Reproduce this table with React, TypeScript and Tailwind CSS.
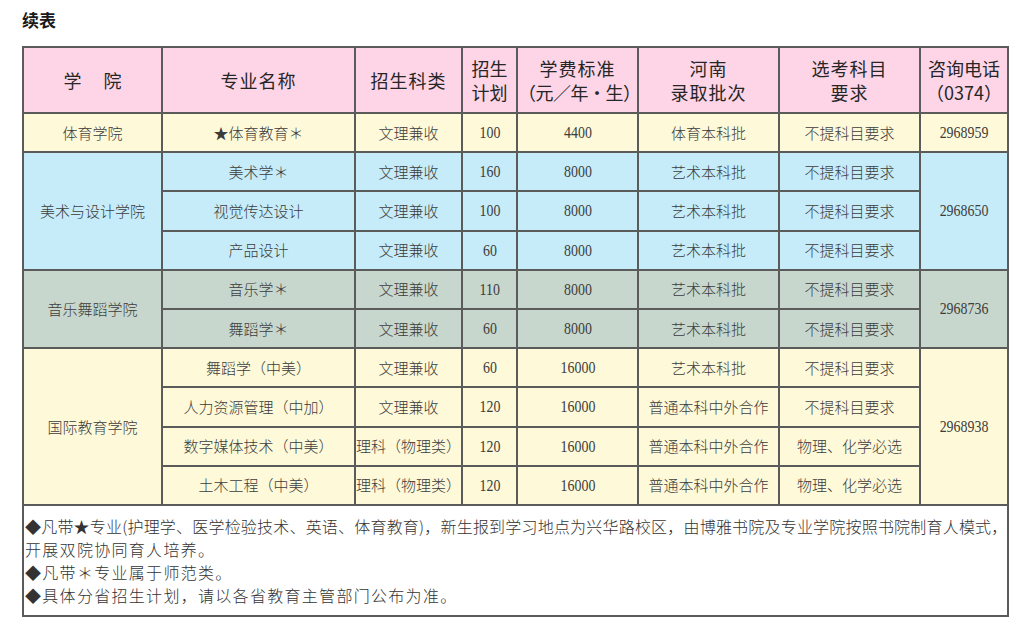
import React from 'react';

type Row = {
  major: string;
  kind: string;
  plan: string;
  fee: string;
  batch: string;
  req: string;
};

type Group = {
  college: string;
  phone: string;
  bg: string;
  rows: Row[];
};

const groups: Group[] = [
  {
    college: '体育学院',
    phone: '2968959',
    bg: 'bg-[#fef9d8]',
    rows: [{ major: '★体育教育＊', kind: '文理兼收', plan: '100', fee: '4400', batch: '体育本科批', req: '不提科目要求' }],
  },
  {
    college: '美术与设计学院',
    phone: '2968650',
    bg: 'bg-[#c6ecf9]',
    rows: [
      { major: '美术学＊', kind: '文理兼收', plan: '160', fee: '8000', batch: '艺术本科批', req: '不提科目要求' },
      { major: '视觉传达设计', kind: '文理兼收', plan: '100', fee: '8000', batch: '艺术本科批', req: '不提科目要求' },
      { major: '产品设计', kind: '文理兼收', plan: '60', fee: '8000', batch: '艺术本科批', req: '不提科目要求' },
    ],
  },
  {
    college: '音乐舞蹈学院',
    phone: '2968736',
    bg: 'bg-[#c8d7cd]',
    rows: [
      { major: '音乐学＊', kind: '文理兼收', plan: '110', fee: '8000', batch: '艺术本科批', req: '不提科目要求' },
      { major: '舞蹈学＊', kind: '文理兼收', plan: '60', fee: '8000', batch: '艺术本科批', req: '不提科目要求' },
    ],
  },
  {
    college: '国际教育学院',
    phone: '2968938',
    bg: 'bg-[#fef9d8]',
    rows: [
      { major: '舞蹈学（中美）', kind: '文理兼收', plan: '60', fee: '16000', batch: '艺术本科批', req: '不提科目要求' },
      { major: '人力资源管理（中加）', kind: '文理兼收', plan: '120', fee: '16000', batch: '普通本科中外合作', req: '不提科目要求' },
      { major: '数字媒体技术（中美）', kind: '理科（物理类）', plan: '120', fee: '16000', batch: '普通本科中外合作', req: '物理、化学必选' },
      { major: '土木工程（中美）', kind: '理科（物理类）', plan: '120', fee: '16000', batch: '普通本科中外合作', req: '物理、化学必选' },
    ],
  },
];

const cell = 'border-2 border-[#5b5b5b] text-center align-middle p-0';
const cjk = "[font-family:'Noto_Sans_CJK_SC',sans-serif]";
const num = "[font-family:'Liberation_Serif','Noto_Sans_CJK_SC',serif]";

// condensed serif digits, like the printed table
function Num({ v }: { v: string }) {
  return <span className={`inline-block scale-x-[0.87] text-[16px] ${num}`}>{v}</span>;
}

export default function App() {
  return (
    <div className="w-[1017px] h-[626px] bg-white overflow-hidden">
      <div className={`pt-[8px] pl-[22px] text-[17px] font-bold leading-[24px] text-[#1a1a1a] ${cjk}`}>续表</div>
      <table className="ml-[22px] mt-[14px] w-[985px] border-collapse table-fixed text-[#3c3c3c]">
        <colgroup>
          <col className="w-[139px]" />
          <col className="w-[193px]" />
          <col className="w-[107px]" />
          <col className="w-[55px]" />
          <col className="w-[121px]" />
          <col className="w-[141px]" />
          <col className="w-[141px]" />
          <col className="w-[88px]" />
        </colgroup>
        <thead>
          <tr className={`h-[66px] bg-[#fdd5e7] text-[18px] leading-[24px] text-[#262626] tracking-[1px] ${cjk}`}>
            <th className={`${cell} font-normal`}>
              <span className="tracking-[22px] pl-[22px]">学院</span>
            </th>
            <th className={`${cell} font-normal`}>专业名称</th>
            <th className={`${cell} font-normal`}>招生科类</th>
            <th className={`${cell} font-normal tracking-[0px]`}>
              <div>招生</div>
              <div>计划</div>
            </th>
            <th className={`${cell} font-normal whitespace-nowrap`}>
              <div>学费标准</div>
              <div className="tracking-[-0.5px]">（元／年·生）</div>
            </th>
            <th className={`${cell} font-normal`}>
              <div>河南</div>
              <div>录取批次</div>
            </th>
            <th className={`${cell} font-normal`}>
              <div>选考科目</div>
              <div>要求</div>
            </th>
            <th className={`${cell} font-normal tracking-[0px] whitespace-nowrap`}>
              <div>咨询电话</div>
              <div>（0374）</div>
            </th>
          </tr>
        </thead>
        <tbody className={`text-[15px] leading-[20px] font-light ${cjk}`}>
          {groups.map((g) =>
            g.rows.map((r, i) => (
              <tr key={g.college + r.major} className={`h-[39.2px] ${g.bg}`}>
                {i === 0 && (
                  <td rowSpan={g.rows.length} className={cell}>
                    {g.college}
                  </td>
                )}
                <td className={cell}>{r.major}</td>
                <td className={`${cell} whitespace-nowrap`}>{r.kind}</td>
                <td className={cell}>
                  <Num v={r.plan} />
                </td>
                <td className={cell}>
                  <Num v={r.fee} />
                </td>
                <td className={cell}>{r.batch}</td>
                <td className={cell}>{r.req}</td>
                {i === 0 && (
                  <td rowSpan={g.rows.length} className={cell}>
                    <Num v={g.phone} />
                  </td>
                )}
              </tr>
            ))
          )}
          <tr className="bg-white">
            <td colSpan={8} className="border-2 border-[#5b5b5b] p-0 pt-[9px] pb-[8px] pl-[1px] text-left text-[16px] leading-[23px] text-[#333] whitespace-nowrap tracking-[1.3px]">
              <div className="tracking-[0.2px]">◆凡带★专业(护理学、医学检验技术、英语、体育教育)，新生报到学习地点为兴华路校区，由博雅书院及专业学院按照书院制育人模式，</div>
              <div>开展双院协同育人培养。</div>
              <div>◆凡带＊专业属于师范类。</div>
              <div>◆具体分省招生计划，请以各省教育主管部门公布为准。</div>
            </td>
          </tr>
        </tbody>
      </table>
    </div>
  );
}
